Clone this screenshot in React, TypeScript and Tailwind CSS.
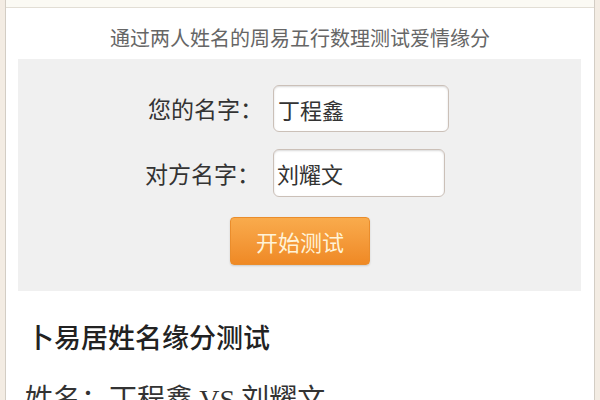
import React from "react";

const cjk = "font-['Noto_Sans_CJK_SC','Noto_Sans',sans-serif]";

export default function App() {
  return (
    <div className={`h-[400px] w-[600px] overflow-hidden bg-[#f3ece3] px-[5px] ${cjk}`}>
      <div className="h-full border-x border-[#d3cdc4] bg-white">
        <div className="h-[8px] border-b border-[#e2ded5] bg-[#fbfaf4]" />

        <p className="mt-[20px] text-center text-[20px] leading-[20px] text-[#666]">
          通过两人姓名的周易五行数理测试爱情缘分
        </p>

        <div className="mt-[11px] ml-[12px] mr-[13px] flex h-[232px] flex-col bg-[#f0f0f0] pt-[26px]">
          <div className="ml-[130px] flex items-center">
            <span className="mr-[10px] w-[115px] text-[23px] leading-[23px] text-[#333]">您的名字：</span>
            <input
              readOnly
              value="丁程鑫"
              className="h-[47px] w-[176px] rounded-[6px] border border-[#cbc0b8] bg-white pl-[4px] text-[22px] text-[#333] shadow-[inset_0_1px_2px_rgba(0,0,0,0.15)] outline-none"
            />
          </div>
          <div className="mt-[17px] ml-[127px] flex items-center">
            <span className="mr-[13px] w-[115px] text-[23px] leading-[23px] text-[#333]">对方名字：</span>
            <input
              readOnly
              value="刘耀文"
              className="h-[48px] w-[172px] rounded-[6px] border border-[#cbc0b8] bg-white pl-[3px] text-[22px] text-[#333] shadow-[inset_0_1px_2px_rgba(0,0,0,0.15)] outline-none"
            />
          </div>
          <div className="mt-[20px] flex justify-center pl-[1px]">
            <button
              type="button"
              className="h-[48px] w-[140px] rounded-[4px] border border-[#ea8d2c] bg-gradient-to-b from-[#f9ab4c] to-[#ef8924] text-[22px] text-[#fff3d8] shadow-[0_1px_2px_rgba(0,0,0,0.15)]"
            >
              开始测试
            </button>
          </div>
        </div>

        <h2 className="mt-[32px] ml-[21px] text-[27px] font-medium leading-[27px] text-[#222]">
          卜易居姓名缘分测试
        </h2>
        <p className="mt-[33px] ml-[19px] text-[28px] leading-[28px] text-[#333]">
          姓名：丁程鑫 <span className="font-['Liberation_Serif',serif]">VS</span> 刘耀文
        </p>
      </div>
    </div>
  );
}
